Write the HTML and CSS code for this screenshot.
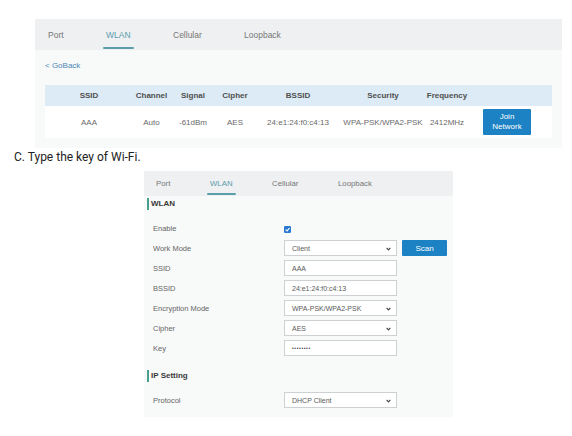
FILE: index.html
```html
<!DOCTYPE html>
<html lang="en">
<head>
<meta charset="utf-8">
<title>WLAN</title>
<link rel="stylesheet" href="styles.css">
</head>
<body>
<div class="page">
  <section class="panel panel-top">
    <nav class="tabs tabs-lg">
      <span class="tab t-port">Port</span>
      <span class="tab t-wlan active">WLAN</span>
      <span class="tab t-cell">Cellular</span>
      <span class="tab">Loopback</span>
    </nav>
    <div class="panel-body">
      <a class="goback">&lt; GoBack</a>
      <div class="scan-table">
        <div class="tr th">
          <div>SSID</div><div>Channel</div><div>Signal</div><div>Cipher</div><div>BSSID</div><div>Security</div><div>Frequency</div><div></div><div></div>
        </div>
        <div class="tr td">
          <div>AAA</div><div>Auto</div><div>-61dBm</div><div>AES</div><div>24:e1:24:f0:c4:13</div><div>WPA-PSK/WPA2-PSK</div><div>2412MHz</div>
          <div><button class="join">Join<br>Network</button></div><div></div>
        </div>
      </div>
    </div>
  </section>

  <p class="step">C. Type the key of Wi-Fi.</p>

  <section class="panel panel-form">
    <nav class="tabs tabs-sm">
      <span class="tab t-port">Port</span>
      <span class="tab t-wlan active">WLAN</span>
      <span class="tab t-cell">Cellular</span>
      <span class="tab">Loopback</span>
    </nav>
    <div class="form-body">
      <h3 class="sec">WLAN</h3>
      <div class="rows">
        <div class="row">
          <span class="lbl">Enable</span>
          <span class="check"><svg width="7" height="7" viewBox="0 0 7 7"><rect width="7" height="7" rx="1.2" fill="#2a78cf"/><path d="M1.6 3.6 L3 4.9 L5.5 2.1" fill="none" stroke="#fff" stroke-width="1.1"/></svg></span>
        </div>
        <div class="row">
          <span class="lbl">Work Mode</span>
          <span class="field select">Client<svg class="chev" width="5" height="4" viewBox="0 0 5 4"><path d="M0.6 0.8 L2.5 2.8 L4.4 0.8" fill="none" stroke="#444" stroke-width="1.2"/></svg></span>
          <button class="scan">Scan</button>
        </div>
        <div class="row">
          <span class="lbl">SSID</span>
          <span class="field">AAA</span>
        </div>
        <div class="row">
          <span class="lbl">BSSID</span>
          <span class="field">24:e1:24:f0:c4:13</span>
        </div>
        <div class="row">
          <span class="lbl">Encryption Mode</span>
          <span class="field select">WPA-PSK/WPA2-PSK<svg class="chev" width="5" height="4" viewBox="0 0 5 4"><path d="M0.6 0.8 L2.5 2.8 L4.4 0.8" fill="none" stroke="#444" stroke-width="1.2"/></svg></span>
        </div>
        <div class="row">
          <span class="lbl">Cipher</span>
          <span class="field select">AES<svg class="chev" width="5" height="4" viewBox="0 0 5 4"><path d="M0.6 0.8 L2.5 2.8 L4.4 0.8" fill="none" stroke="#444" stroke-width="1.2"/></svg></span>
        </div>
        <div class="row">
          <span class="lbl">Key</span>
          <span class="field key">••••••••</span>
        </div>
      </div>
      <h3 class="sec sec-ip">IP Setting</h3>
      <div class="rows rows-ip">
        <div class="row">
          <span class="lbl">Protocol</span>
          <span class="field select">DHCP Client<svg class="chev" width="5" height="4" viewBox="0 0 5 4"><path d="M0.6 0.8 L2.5 2.8 L4.4 0.8" fill="none" stroke="#444" stroke-width="1.2"/></svg></span>
        </div>
      </div>
    </div>
  </section>
</div>
</body>
</html>
```

FILE: styles.css
```css
html, body {
  margin: 0;
  padding: 0;
  background: #ffffff;
}

body {
  font-family: "Liberation Sans", Arial, sans-serif;
  color: #555;
}

.page {
  padding-top: 19px;
}

.panel {
  background: #f8f9f9;
}

.panel-top {
  margin-left: 35px;
  width: 527px;
}

.tabs {
  display: flex;
  align-items: stretch;
  background: #eef0f1;
  color: #777;
}

.tab {
  position: relative;
  display: flex;
  align-items: center;
}

.tab.active {
  color: #5b9caf;
}

.tab.active::after {
  content: "";
  position: absolute;
  left: -3px;
  bottom: 1px;
  height: 2px;
  background: #5a9fab;
  border-radius: 1px;
}

.tabs-lg {
  height: 31px;
  padding-left: 13px;
  font-size: 8.5px;
}

.tabs-lg .t-port { width: 58px; }
.tabs-lg .t-wlan { width: 67px; }
.tabs-lg .t-cell { width: 71px; }
.tabs-lg .active::after { width: 31px; }

.panel-body {
  padding: 10px 10px 10px 10px;
}

.goback {
  display: block;
  font-size: 8px;
  line-height: 12px;
  color: #4b87b5;
  margin-bottom: 13px;
}

.scan-table {
  font-size: 8px;
}

.tr {
  display: grid;
  grid-template-columns: 88px 37px 46px 38px 88px 82px 46px 74px 8px;
  align-items: center;
  text-align: center;
}

.th {
  height: 21px;
  background: #dcebf6;
  font-weight: bold;
  color: #4f4f4f;
}

.td {
  height: 32px;
  background: #ffffff;
  color: #6a6a6a;
}

.join {
  display: block;
  margin: 0 auto;
  width: 48px;
  height: 26px;
  border: 0;
  border-radius: 1px;
  padding: 0;
  background: #1c82c4;
  color: #ffffff;
  font-family: "Liberation Sans", Arial, sans-serif;
  font-size: 8px;
  line-height: 10px;
}

.step {
  margin: 1px 0 6px 0;
  padding-left: 14px;
  font-family: Roboto, "Liberation Sans", sans-serif;
  font-size: 12px;
  line-height: 16px;
  color: #222;
}

.panel-form {
  margin-left: 144px;
  width: 309px;
  height: 246px;
}

.tabs-sm {
  height: 25px;
  padding-left: 12px;
  font-size: 7.8px;
}

.tabs-sm .t-port { width: 54px; }
.tabs-sm .t-wlan { width: 62px; }
.tabs-sm .t-cell { width: 66px; }
.tabs-sm .active::after { width: 29px; }

.form-body {
  padding-top: 2px;
}

.sec {
  margin: 0 0 0 3px;
  padding-left: 2px;
  border-left: 2px solid #45a08e;
  font-size: 8px;
  line-height: 12px;
  font-weight: bold;
  color: #3a3a3a;
}

.sec-ip {
  margin-top: 12px;
}

.rows {
  margin-top: 8px;
  padding-left: 9px;
}

.row {
  display: flex;
  align-items: center;
  height: 20px;
}

.lbl {
  width: 131px;
  font-size: 7.5px;
  color: #666;
}

.check {
  display: flex;
  margin-top: 3px;
}

.field {
  position: relative;
  box-sizing: border-box;
  width: 113px;
  height: 16px;
  border: 1px solid #cdd1d4;
  background: #ffffff;
  padding-left: 7px;
  display: flex;
  align-items: center;
  font-size: 7px;
  color: #5a5a5a;
}

.field.key {
  font-size: 5px;
  letter-spacing: 0.6px;
  color: #444;
}

.chev {
  position: absolute;
  right: 5px;
  top: 6px;
}

.scan {
  margin-left: 5px;
  width: 45px;
  height: 16px;
  border: 0;
  border-radius: 1px;
  padding: 0;
  background: #1c82c4;
  color: #ffffff;
  font-family: "Liberation Sans", Arial, sans-serif;
  font-size: 8px;
}
```
